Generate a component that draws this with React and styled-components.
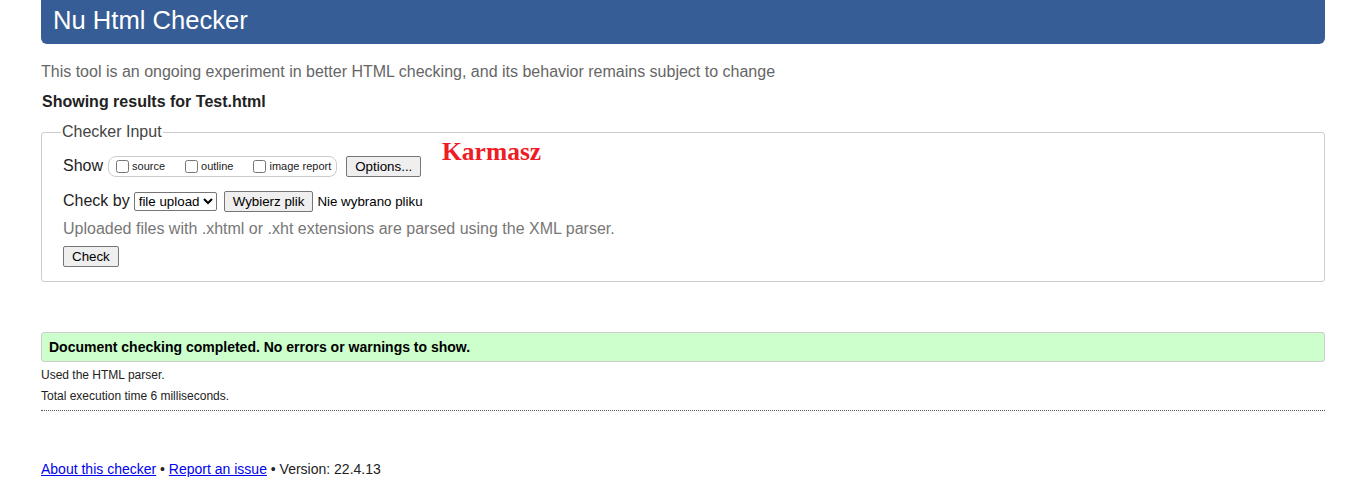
import styled, { createGlobalStyle } from "styled-components";

const GlobalStyle = createGlobalStyle`
  body {
    margin: 0;
    background: #fff;
    font-family: "Liberation Sans", Arial, sans-serif;
    color: #222;
  }
`;

export default function App() {
  return (
    <>
      <GlobalStyle />
      <Page>
        <Header>Nu Html Checker</Header>
        <Intro>This tool is an ongoing experiment in better HTML checking, and its behavior remains subject to change</Intro>
        <Showing>Showing results for Test.html</Showing>
        <Fieldset>
          <Legend>Checker Input</Legend>
          <Stamp>Karmasz</Stamp>
          <Row>
            <Label>Show</Label>
            <Options>
              <Opt><Box type="checkbox" />source</Opt>
              <Opt><Box type="checkbox" />outline</Opt>
              <Opt><Box type="checkbox" />image report</Opt>
            </Options>
            <Button>Options...</Button>
          </Row>
          <Row $gap>
            <Label>Check by</Label>
            <Select defaultValue="file">
              <option value="file">file upload</option>
            </Select>
            <Button>Wybierz plik</Button>
            <Small>Nie wybrano pliku</Small>
          </Row>
          <Note>Uploaded files with .xhtml or .xht extensions are parsed using the XML parser.</Note>
          <Row>
            <Button>Check</Button>
          </Row>
        </Fieldset>
        <Success>Document checking completed. No errors or warnings to show.</Success>
        <Meta>Used the HTML parser.</Meta>
        <Meta>Total execution time 6 milliseconds.</Meta>
        <Divider />
        <Footer>
          <FootLink href="#">About this checker</FootLink> • <FootLink href="#">Report an issue</FootLink> • Version: 22.4.13
        </Footer>
      </Page>
    </>
  );
}

const Page = styled.div`
  padding: 0 41px 20px;
`;

const Header = styled.h1`
  margin: 0;
  height: 44px;
  line-height: 40px;
  padding-left: 12px;
  background: #365d95;
  color: #fff;
  font-size: 25.6px;
  font-weight: normal;
  border-radius: 0 0 6px 6px;
`;

const Intro = styled.p`
  margin: 18px 0 0;
  font-size: 16px;
  line-height: 19px;
  color: #666;
`;

const Showing = styled.h2`
  margin: 11px 0 0 1px;
  font-size: 16px;
  line-height: 19px;
  font-weight: bold;
`;

const Fieldset = styled.fieldset`
  position: relative;
  margin: 12px 0 0;
  padding: 7px 21px 13px;
  border: 1px solid #ccc;
  border-radius: 3px;
`;

const Legend = styled.legend`
  padding: 0 1px;
  margin-left: -2px;
  font-size: 16px;
  color: #444;
`;

const Stamp = styled.div`
  position: absolute;
  left: 400px;
  top: -4px;
  font-family: "Liberation Serif", "Times New Roman", serif;
  font-weight: bold;
  font-size: 25.5px;
  color: #ee1c25;
`;

const Row = styled.div`
  display: flex;
  align-items: center;
  gap: 4px;
  margin-top: ${(p) => (p.$gap ? "11px" : "6px")};
  min-height: 24px;
`;

const Label = styled.span`
  font-size: 16px;
  color: #222;
`;

const Options = styled.span`
  display: inline-flex;
  align-items: center;
  height: 19px;
  padding: 0 5px 0 4px;
  border: 1px solid #ccc;
  border-radius: 8px;
  margin: 0 5px 0 1px;
`;

const Opt = styled.label`
  display: inline-flex;
  align-items: center;
  font-size: 11px;
  color: #222;
  margin-right: 17px;
  &:last-child {
    margin-right: 0;
  }
`;

const Box = styled.input`
  width: 13px;
  height: 13px;
  margin: 0 3px 0 3px;
`;

const Button = styled.button`
  font-family: "Liberation Sans", Arial, sans-serif;
  font-size: 13.33px;
  padding: 2px 8px;
  height: 21px;
  background: #efefef;
  border: 1px solid #767676;
  border-radius: 2px;
  color: #000;
`;

const Select = styled.select`
  font-family: "Liberation Sans", Arial, sans-serif;
  font-size: 13.33px;
  height: 19px;
  border: 1px solid #767676;
  border-radius: 2px;
  background: #fff;
  color: #000;
  margin-right: 3px;
`;

const Small = styled.span`
  font-size: 13.33px;
  color: #000;
`;

const Note = styled.p`
  margin: 6px 0 0;
  font-size: 16px;
  line-height: 19px;
  color: #777;
`;

const Success = styled.div`
  margin-top: 50px;
  padding: 6px 7px;
  background: #ccffcc;
  border: 1px solid #ccc;
  border-radius: 3px;
  font-size: 14px;
  font-weight: bold;
  color: #000;
`;

const Meta = styled.p`
  margin: 5px 0 0;
  font-size: 12px;
  line-height: 16px;
  color: #222;
`;

const Divider = styled.hr`
  margin: 6px 0 0;
  border: 0;
  border-top: 1px dotted #555;
`;

const Footer = styled.p`
  margin: 50px 0 0;
  font-size: 14px;
  color: #222;
`;

const FootLink = styled.a`
  color: #00e;
`;
